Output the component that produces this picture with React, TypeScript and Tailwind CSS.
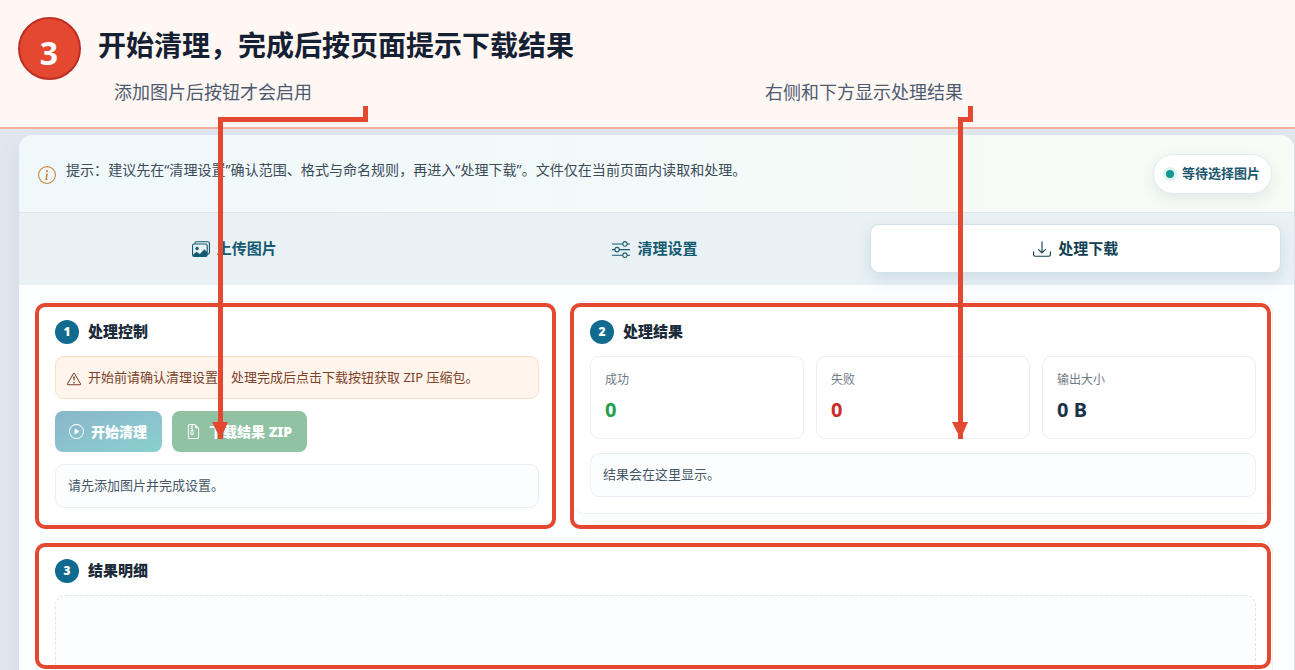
import type { ReactNode } from 'react';
import {
    BsDownload,
    BsExclamationTriangle,
    BsFileEarmarkZip,
    BsImages,
    BsInfoCircle,
    BsPlayCircle,
    BsSliders,
} from 'react-icons/bs';

const tabs = [
    { label: '上传图片', icon: <BsImages size={18} />, active: false },
    { label: '清理设置', icon: <BsSliders size={18} />, active: false },
    { label: '处理下载', icon: <BsDownload size={18} />, active: true },
];

const stats = [
    { label: '成功', value: '0', color: 'text-[#22a04a]' },
    { label: '失败', value: '0', color: 'text-[#cb2a2a]' },
    { label: '输出大小', value: '0 B', color: 'text-[#1b3347]' },
];

const SectionTitle = ({ step, children }: { step: number; children: ReactNode }) => (
    <div className="flex h-6 items-center gap-[9px]">
        <span className="flex size-6 items-center justify-center rounded-full bg-[#106b8f] text-xs font-black text-white">
            {step}
        </span>
        <h2 className="-mt-[2px] text-[15px] leading-6 font-black text-[#1c2b3a]">{children}</h2>
    </div>
);

const StatusBox = ({ children }: { children: ReactNode }) => (
    <div className="flex h-11 items-center rounded-[9px] border border-[#e9eff4] bg-[#fbfdff] px-3 text-[13px] text-[#475767]">
        {children}
    </div>
);

const GuideHeader = () => (
    <header className="flex h-[129px] gap-[17px] border-b-2 border-[#f5b0a0] bg-[#fff7f4] pt-[17px] pl-[18px]">
        <div className="flex size-[63px] shrink-0 items-center justify-center rounded-full border-2 border-[#bd2f22] bg-[#e54830] pt-2 pr-px text-[32px] leading-none font-bold text-white">
            3
        </div>
        <div className="flex-1 pt-[7px]">
            <h1 className="text-[28px] leading-[42px] font-bold text-[#162033]">
                开始清理，完成后按页面提示下载结果
            </h1>
            <div className="flex pt-3 pl-4 text-[18px] leading-[28px] text-[#4d5b70]">
                <p className="w-[651px]">添加图片后按钮才会启用</p>
                <p>右侧和下方显示处理结果</p>
            </div>
        </div>
    </header>
);

// Red callouts drawn over the panel
const Annotations = () => (
    <>
        <div className="absolute top-[303px] left-[35px] h-[226px] w-[521px] rounded-[10px] border-4 border-[#e54830]" />
        <div className="absolute top-[303px] left-[570px] h-[226px] w-[701px] rounded-[10px] border-4 border-[#e54830]" />
        <div className="absolute top-[543px] left-[35px] h-[126px] w-[1236px] rounded-[10px] border-4 border-[#e54830]" />
        <svg className="absolute top-0 left-0" width="1295" height="670" viewBox="0 0 1295 670">
            <g fill="none" stroke="#e54830" strokeWidth="5">
                <path d="M365.5 106V119.5H220.5V439" />
                <path d="M970.5 106V119.5H960.5V439" />
            </g>
            <g fill="#e54830">
                <path d="M212 422H228L220.5 439Z" />
                <path d="M952 422H968L960.5 439Z" />
            </g>
        </svg>
    </>
);

const App = () => (
    <div className="relative h-[670px] w-[1295px] overflow-hidden bg-[#e2e7ef] font-['Noto_Sans','Noto_Sans_CJK_SC',sans-serif]">
        <GuideHeader />

        <main className="mt-[6px] ml-[19px] h-[560px] w-[1275px] overflow-hidden rounded-t-[14px] bg-[#fdfeff] shadow-[0_8px_24px_rgba(40,70,110,0.08)]">
            <div className="flex h-[78px] items-center justify-between border-b border-[#dae6ec] bg-linear-to-r from-[#eff8fc] via-[#f3faf9] to-[#f8fbf5] pr-[22px] pl-[19px]">
                <div className="flex items-start gap-[10px] pb-[2px]">
                    <BsInfoCircle size={18} className="mt-[4px] text-[#c98a3c]" />
                    <p className="mt-[-4px] text-[14.05px] leading-6 text-[#3b4b58]">
                        提示：建议先在“清理设置”确认范围、格式与命名规则，再进入“处理下载”。文件仅在当前页面内读取和处理。
                    </p>
                </div>
                <div className="flex h-10 w-[119px] items-center gap-2 rounded-full border border-[#e0ebef] bg-white pl-3 text-[13px] font-bold text-[#1c566b] shadow-[0_5px_14px_rgba(30,90,110,0.10)]">
                    <span className="size-2 shrink-0 rounded-full bg-[#129a92] ring-[3px] ring-[#dff2f2]" />
                    <span className="whitespace-nowrap">等待选择图片</span>
                </div>
            </div>

            <nav className="grid h-[72px] grid-cols-3 gap-[10px] bg-[#e9f1f5] pt-[11px] pr-[13px] pb-3 pl-[10px]">
                {tabs.map((tab) => (
                    <button
                        key={tab.label}
                        className={
                            tab.active
                                ? 'flex items-center justify-center gap-[7px] rounded-[9px] border border-[#d3e2e9] bg-white text-[15px] font-bold text-[#123f52] shadow-[0_6px_16px_rgba(20,90,120,0.12)]'
                                : 'flex items-center justify-center gap-[7px] text-[15px] font-bold text-[#145a70]'
                        }
                    >
                        <span>{tab.icon}</span>
                        {tab.label}
                    </button>
                ))}
            </nav>

            <div className="px-[17px] pt-4">
                <div className="flex items-start gap-[15px]">
                    <section className="h-[223px] w-[520px] rounded-xl border border-[#edf1f4] bg-white px-[18px] pt-[18px]">
                        <SectionTitle step={1}>处理控制</SectionTitle>
                        <div className="mt-3 flex h-[43px] w-[484px] items-center gap-[7px] rounded-[9px] border border-[#f7e0c6] bg-[#fff5ec] px-3 text-[13px] text-[#7b4129]">
                            <BsExclamationTriangle size={14} className="-ml-px mt-[2px]" />
                            开始前请确认清理设置。处理完成后点击下载按钮获取 ZIP 压缩包。
                        </div>
                        <div className="mt-3 flex gap-[10px] text-[14px] font-black text-white">
                            <button className="flex h-[41px] w-[107px] items-center gap-2 rounded-[8px] bg-linear-to-br from-[#8ab6cb] to-[#8ad0cf] pl-[14px]">
                                <BsPlayCircle size={15} />
                                <span className="-ml-px">开始清理</span>
                            </button>
                            <button className="flex h-[41px] w-[135px] items-center gap-2 rounded-[8px] bg-[#90c2a3] pl-[14px]">
                                <BsFileEarmarkZip size={15} />
                                下载结果 ZIP
                            </button>
                        </div>
                        <div className="mt-3 w-[484px]">
                            <StatusBox>请先添加图片并完成设置。</StatusBox>
                        </div>
                    </section>

                    <section className="h-[213px] w-[702px] rounded-xl border border-[#edf1f4] bg-white px-[18px] pt-[18px]">
                        <SectionTitle step={2}>处理结果</SectionTitle>
                        <div className="mt-3 grid w-[666px] grid-cols-3 gap-3">
                            {stats.map((stat) => (
                                <div
                                    key={stat.label}
                                    className="h-[83px] rounded-[9px] border border-[#ebeff3] bg-white px-[14px] pt-[13px]"
                                >
                                    <div className="text-xs leading-5 text-[#6f7b87]">{stat.label}</div>
                                    <div className={`mt-[6px] text-[20px] leading-7 font-bold ${stat.color}`}>{stat.value}</div>
                                </div>
                            ))}
                        </div>
                        <div className="mt-[14px] w-[666px]">
                            <StatusBox>结果会在这里显示。</StatusBox>
                        </div>
                    </section>
                </div>

                <section className="mt-4 h-[160px] w-[1237px] rounded-xl border border-[#edf1f4] bg-white px-[18px] pt-[18px]">
                    <SectionTitle step={3}>结果明细</SectionTitle>
                    <div className="mt-3 h-[120px] w-[1201px] rounded-[10px] border border-dashed border-[#dfe6eb] bg-[#fbfdff]" />
                </section>
            </div>
        </main>

        <Annotations />
    </div>
);

export default App;
